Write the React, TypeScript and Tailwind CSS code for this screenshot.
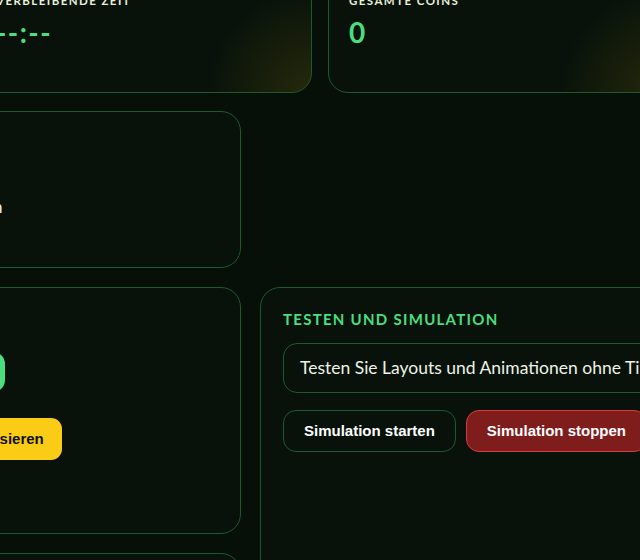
const card =
  "rounded-[20px] border border-[#1d5a2b] bg-[#08120a]";

function StatCard({ label, value }: { label: string; value: string }) {
  return (
    <div
      className={`${card} h-[121px] px-5 pt-5 bg-[radial-gradient(circle_at_100%_100%,rgba(250,204,21,0.12),transparent_105px)]`}
    >
      <div className="text-[11.5px] font-bold uppercase leading-4 tracking-[0.125em] text-[#e9f0dc]">
        {label}
      </div>
      <div className="mt-[7px] text-[28px] font-bold leading-8 tracking-[0.05em] text-[#4ade80]">
        {value}
      </div>
    </div>
  );
}

function Heading({ children }: { children: string }) {
  return (
    <h3 className="text-[15px] font-bold uppercase leading-[18px] tracking-[0.085em] text-[#4ade80]">
      {children}
    </h3>
  );
}

export default function App() {
  return (
    <div className="h-[560px] w-[640px] overflow-hidden bg-[#060f08] font-['Lato',sans-serif] text-[#eef3e6]">
      <div className="-ml-[200px] -mt-[28px] flex w-[960px] flex-col gap-[18px]">
        {/* Statistiken */}
        <div className="grid grid-cols-[159px_337px_337px] gap-4">
          <StatCard label="Zuschauer" value="0" />
          <StatCard label="Verbleibende Zeit" value="--:--" />
          <StatCard label="Gesamte Coins" value="0" />
        </div>

        <div className="grid grid-cols-[441px_1fr] gap-x-[19px] gap-y-[19px]">
          {/* Verbindung */}
          <section className={`${card} col-start-1 row-start-1 h-[157px] p-[22px]`}>
            <Heading>Status</Heading>
            <p className="mt-[44px] text-[17px] leading-[22px]">
              Status: Nicht verbunden
            </p>
          </section>

          {/* Timer */}
          <section className={`${card} col-start-1 row-start-2 h-[247px] p-[22px]`}>
            <Heading>Timer</Heading>
            <div className="mt-[24px] h-10 w-[182px] rounded-[12px] bg-[#4ade80]" />
            <button className="mt-[26px] h-[42px] w-[239px] rounded-[11px] bg-[#facc15] font-['Liberation_Sans',sans-serif] text-[15px] font-bold text-[#111]">
              Verbindung synchronisieren
            </button>
          </section>

          {/* Testen und Simulation */}
          <section className={`${card} col-start-2 row-start-2 row-span-2 p-[22px]`}>
            <Heading>Testen und Simulation</Heading>
            <div className="mt-[15px] overflow-hidden whitespace-nowrap rounded-[14px] border border-[#1d5a2b] px-4 py-3 text-[17.5px] leading-6">
              Testen Sie Layouts und Animationen ohne TikTok-Verbindung.
            </div>
            <div className="mt-[17px] flex gap-[10px] font-['Liberation_Sans',sans-serif] text-[15px] font-bold">
              <button className="h-[42px] rounded-[13px] border border-[#1d5a2b] bg-[#08120a] px-5 text-white">
                Simulation starten
              </button>
              <button className="h-[42px] rounded-[13px] border border-[#dc3b3b] bg-[#7f1d1d] px-5 text-white">
                Simulation stoppen
              </button>
            </div>
          </section>

          {/* Protokoll */}
          <section className={`${card} col-start-1 row-start-3 h-[200px] p-[22px]`}>
            <Heading>Log</Heading>
          </section>
        </div>
      </div>
    </div>
  );
}
